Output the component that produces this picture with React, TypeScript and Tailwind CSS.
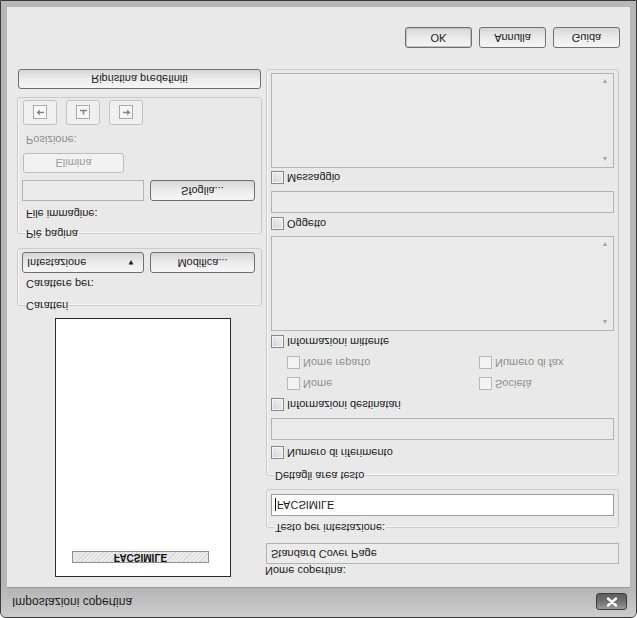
import React from 'react';
import clsx from 'clsx';

// The reference dialog is shown upside down (mirrored top-to-bottom),
// so the dialog is laid out normally and the whole window is flipped.

function Btn({
  label,
  className = '',
  disabled,
  primary,
}: {
  label: React.ReactNode;
  className?: string;
  disabled?: boolean;
  primary?: boolean;
}) {
  return (
    <button
      className={clsx(
        'flex shrink-0 items-center justify-center rounded-[3px] border text-[11px] leading-none',
        disabled
          ? 'border-[#bdbdbd] bg-[#f2f2f2] text-[#9a9a9a]'
          : 'border-[#707070] bg-gradient-to-b from-[#f6f6f6] via-[#ebebeb] to-[#d6d6d6] text-[#1b1b1b]',
        primary && 'border-[#3f3f3f] shadow-[inset_0_0_0_1px_#bfbfbf]',
        className
      )}
    >
      {label}
    </button>
  );
}

function Check({ label, disabled, className = '' }: { label: string; disabled?: boolean; className?: string }) {
  return (
    <div className={clsx('flex h-[13px] items-center gap-[3px]', className)}>
      <span
        className={clsx(
          'h-[13px] w-[13px] shrink-0 border',
          disabled
            ? 'border-[#b9b9b9] bg-[#f3f3f3]'
            : 'border-[#8a8a8a] bg-gradient-to-br from-[#d2d2d2] to-[#f4f4f4] shadow-[inset_0_0_0_1px_#f5f5f5]'
        )}
      />
      <span className={clsx('leading-none', disabled ? 'text-[#8f8f8f]' : 'text-[#1b1b1b]')}>{label}</span>
    </div>
  );
}

function Field({ className = '', children }: { className?: string; children?: React.ReactNode }) {
  return (
    <div
      className={clsx(
        'flex items-center border border-[#b3b3b3] bg-[#ebebeb] px-[4px] text-[11px] text-[#1b1b1b]',
        className
      )}
    >
      {children}
    </div>
  );
}

function ListBox({ className = '' }: { className?: string }) {
  return (
    <div className={clsx('flex h-[95px] border border-[#b3b3b3] bg-[#ebebeb]', className)}>
      <div className="flex-1" />
      <div className="flex w-[16px] flex-col items-center justify-between py-[4px] text-[7px] leading-none text-[#a5a5a5]">
        <span>▲</span>
        <span>▼</span>
      </div>
    </div>
  );
}

function Group({ title, className = '', children }: { title: string; className?: string; children: React.ReactNode }) {
  return (
    <fieldset className={clsx('rounded-[3px] border border-[#cbcbcb] px-[4px] shadow-[inset_1px_1px_0_#f7f7f7]', className)}>
      <legend className="ml-[3px] px-[1px] text-[11px] leading-[14px] text-[#1b1b1b]">{title}</legend>
      {children}
    </fieldset>
  );
}

function PosBtn({ icon }: { icon: 'left' | 'center' | 'right' }) {
  return (
    <div className="flex h-[25px] w-[34px] items-center justify-center rounded-[3px] border border-[#c2c2c2] bg-[#f0f0f0]">
      <div className="flex h-[14px] w-[14px] items-center justify-center border border-[#a9a9a9] bg-[#f7f7f7]">
        <svg width="9" height="9" viewBox="0 0 9 9" fill="#858585" stroke="#858585">
          {icon === 'left' && (
            <>
              <path d="M3 4.5h5" strokeWidth="1.6" />
              <path d="M0.6 4.5L3.8 1.6v5.8z" stroke="none" />
            </>
          )}
          {icon === 'right' && (
            <>
              <path d="M1 4.5h5" strokeWidth="1.6" />
              <path d="M8.4 4.5L5.2 1.6v5.8z" stroke="none" />
            </>
          )}
          {icon === 'center' && (
            <>
              <path d="M1 6.5h7" strokeWidth="1.6" />
              <path d="M4.5 2.5v4" strokeWidth="1.6" />
            </>
          )}
        </svg>
      </div>
    </div>
  );
}

export default function App() {
  return (
    <div className="h-[618px] w-[637px] bg-white">
      <div className="flex h-[618px] w-[637px] -scale-y-100 flex-col overflow-hidden rounded-t-[6px] border border-[#3a3a3a] bg-[#b7b7b7] font-['Liberation_Sans',Arial,sans-serif] text-[11px] text-[#1b1b1b]">
        {/* title bar */}
        <div className="flex h-[29px] shrink-0 items-center justify-between bg-gradient-to-b from-[#cdcdcd] to-[#b5b5b5] pl-[11px] pr-[9px]">
          <span className="text-[12px] text-[#1c1c1c]">Impostazioni copertina</span>
          <div className="mt-[1px] flex h-[17px] w-[31px] items-center justify-center rounded-[3px] border border-[#3c3c3c] bg-gradient-to-b from-[#9a9a9a] via-[#707070] to-[#5e5e5e]">
            <svg width="12" height="10" viewBox="0 0 12 10">
              <path d="M2 1.5l8 7M10 1.5l-8 7" stroke="#ffffff" strokeWidth="2.4" strokeLinecap="round" />
            </svg>
          </div>
        </div>

        {/* body */}
        <div className="flex flex-1 flex-col px-[6px] pb-[6px]">
          <div className="flex flex-1 flex-col border-t border-[#9a9a9a] bg-[#e9e9e9] px-[10px] pt-[9px]">
            <div className="flex gap-[3px]">
              {/* left column */}
              <div className="flex w-[245px] shrink-0 flex-col">
                <div className="ml-[38px] mt-[1px] h-[259px] w-[176px] border border-[#2a2a2a] bg-white pl-[16px] pt-[13px]">
                  <div className="flex h-[12px] w-[137px] items-center justify-center border border-[#8e8e8e] bg-[repeating-linear-gradient(45deg,#d9d9d9_0px,#d9d9d9_1px,#ececec_1px,#ececec_3px)] text-[10px] font-bold leading-none text-[#111]">
                    FACSIMILE
                  </div>
                </div>

                <Group title="Caratteri" className="mt-[5px] pb-[3px]">
                  <div className="mt-[8px] h-[14px] pl-[4px] leading-[14px]">Carattere per:</div>
                  <div className="mt-[4px] flex gap-[6px]">
                    <div className="flex h-[21px] w-[122px] items-center justify-between rounded-[3px] border border-[#707070] bg-gradient-to-b from-[#f6f6f6] via-[#ebebeb] to-[#d6d6d6] pl-[4px] pr-[8px]">
                      <span>Intestazione</span>
                      <span className="text-[8px] leading-none">▼</span>
                    </div>
                    <Btn label="Modifica..." className="h-[21px] w-[105px]" />
                  </div>
                </Group>

                <Group title="Piè pagina" className="mt-[7px] pb-[2px]">
                  <div className="mt-[6px] h-[14px] pl-[4px] leading-[14px]">File immagine:</div>
                  <div className="mt-[6px] flex gap-[6px]">
                    <Field className="h-[21px] w-[122px]" />
                    <Btn label="Sfoglia..." className="h-[21px] w-[105px]" />
                  </div>
                  <Btn label="Elimina" disabled className="ml-[1px] mt-[7px] h-[20px] w-[101px]" />
                  <div className="mt-[6px] h-[14px] pl-[4px] leading-[14px] text-[#8f8f8f]">Posizione:</div>
                  <div className="ml-[1px] mt-[8px] flex gap-[9px]">
                    <PosBtn icon="left" />
                    <PosBtn icon="center" />
                    <PosBtn icon="right" />
                  </div>
                </Group>

                <Btn label="Ripristina predefiniti" className="ml-[1px] mt-[8px] h-[20px] w-[243px]" />
              </div>

              {/* right column */}
              <div className="flex w-[354px] shrink-0 flex-col">
                <div className="h-[14px] leading-[14px]">Nome copertina:</div>
                <Field className="ml-[1px] h-[21px]">Standard Cover Page</Field>

                <Group title="Testo per intestazione:" className="ml-[1px] mt-[8px] pb-[4px]">
                  <div className="mt-[5px] flex h-[22px] items-center border border-[#9c9c9c] bg-white pl-[3px]">
                    <span className="mr-[1px] h-[13px] w-px bg-[#111]" />
                    <span>FACSIMILE</span>
                  </div>
                </Group>

                <Group title="Dettagli area testo" className="ml-[1px] mt-[6px] pb-[3px]">
                  <Check label="Numero di riferimento" className="mt-[10px]" />
                  <Field className="mt-[6px] h-[22px]" />
                  <Check label="Informazioni destinatari" className="mt-[7px]" />
                  <div className="mt-[8px] flex pl-[16px]">
                    <Check label="Nome" disabled className="w-[192px]" />
                    <Check label="Società" disabled />
                  </div>
                  <div className="mt-[8px] flex pl-[16px]">
                    <Check label="Nome reparto" disabled className="w-[192px]" />
                    <Check label="Numero di fax" disabled />
                  </div>
                  <Check label="Informazioni mittente" className="mt-[8px]" />
                  <ListBox className="mt-[4px]" />
                  <Check label="Oggetto" className="mt-[6px]" />
                  <Field className="mt-[4px] h-[22px]" />
                  <Check label="Messaggio" className="mt-[7px]" />
                  <ListBox className="mt-[3px]" />
                </Group>
              </div>
            </div>

            <div className="mt-[21px] flex justify-end gap-[7px]">
              <Btn label="OK" primary className="h-[21px] w-[67px]" />
              <Btn label="Annulla" className="h-[21px] w-[67px]" />
              <Btn label="Guida" className="h-[21px] w-[67px]" />
            </div>
          </div>
        </div>
      </div>
    </div>
  );
}
